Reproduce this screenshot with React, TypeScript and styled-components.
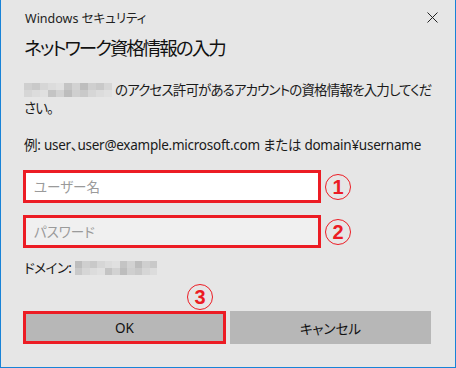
import React from 'react';
import styled, { createGlobalStyle } from 'styled-components';

const GlobalStyle = createGlobalStyle`
  body {
    margin: 0;
    background: #ffffff;
  }
`;

const FONT = `"Noto Sans", "Noto Sans CJK JP", sans-serif`;
const RED = '#ec1c24';

const Dialog = styled.div`
  width: 456px;
  height: 368px;
  box-sizing: border-box;
  background: #e6e6e6;
  border: 1px solid #1883d7;
  border-top: none;
  padding: 0 0 0 22px;
  font-family: ${FONT};
  font-feature-settings: 'palt';
  color: #1a1a1a;
  display: flex;
  flex-direction: column;
`;

const TitleBar = styled.div`
  height: 34px;
  display: flex;
  align-items: center;
  justify-content: space-between;
  padding-left: 2px;
`;

const Caption = styled.span`
  font-size: 12.5px;
  color: #222;
`;

const CloseButton = styled.button`
  width: 44px;
  height: 34px;
  border: none;
  background: transparent;
  display: flex;
  align-items: center;
  justify-content: center;
  padding: 0;
  margin-right: 1px;
`;

const Heading = styled.h1`
  margin: 0;
  padding-left: 1px;
  height: 28px;
  font-size: 18.5px;
  line-height: 28px;
  letter-spacing: -2px;
  font-weight: 400;
  color: #111;
`;

const Paragraph = styled.div<{ $top: number }>`
  margin-top: ${({ $top }) => $top}px;
  display: flex;
  flex-direction: column;
`;

const Line = styled.div<{ $spacing?: number }>`
  height: 18px;
  display: flex;
  align-items: center;
  padding-left: 1px;
  font-size: 13.5px;
  line-height: 18px;
  letter-spacing: ${({ $spacing = -0.85 }) => $spacing}px;
  white-space: nowrap;
  color: #1a1a1a;
`;

const Mosaic = styled.span<{ $cols: number; $cell: number }>`
  display: inline-grid;
  grid-template-columns: repeat(${({ $cols }) => $cols}, ${({ $cell }) => $cell}px);
  grid-auto-rows: 7px;
  margin-right: 3px;
`;

const Cell = styled.span<{ $shade: string }>`
  background: ${({ $shade }) => $shade};
`;

const FieldRow = styled.div<{ $top: number }>`
  margin-top: ${({ $top }) => $top}px;
  height: 33px;
  display: flex;
  align-items: center;
  gap: 4px;
`;

const Field = styled.input<{ $filled?: boolean }>`
  width: 298px;
  height: 33px;
  box-sizing: border-box;
  border: 3px solid ${RED};
  background: ${({ $filled }) => ($filled ? '#ffffff' : '#f0f0f0')};
  padding: 0 8px;
  font-family: ${FONT};
  font-feature-settings: 'palt';
  font-size: 13.5px;
  outline: none;
  &::placeholder {
    color: #9a9a9a;
  }
`;

const Mark = styled.span`
  width: 26px;
  height: 26px;
  box-sizing: border-box;
  border: 1.5px solid ${RED};
  border-radius: 50%;
  display: flex;
  align-items: center;
  justify-content: center;
  font-family: "Liberation Sans", Arial, sans-serif;
  color: ${RED};
  font-size: 20px;
  line-height: 1;
  font-weight: 700;
`;

const Buttons = styled.div`
  position: relative;
  margin-top: 34px;
  display: flex;
  gap: 4px;
`;

const Button = styled.button<{ $marked?: boolean }>`
  height: 33px;
  width: ${({ $marked }) => ($marked ? 203 : 201)}px;
  box-sizing: border-box;
  background: #b7b7b7;
  border: ${({ $marked }) => ($marked ? `3px solid ${RED}` : 'none')};
  font-family: ${FONT};
  font-feature-settings: 'palt';
  font-size: 13.5px;
  font-weight: 400;
  color: #111;
  padding: 0;
`;

const OkMark = styled(Mark)`
  position: absolute;
  left: 164px;
  top: -27px;
`;

const SHADES = ['#dcdcdc', '#cfcfcf', '#c4c4c4', '#d6d6d6', '#bdbdbd', '#e0e0e0', '#c9c9c9', '#d2d2d2'];

const Blur: React.FC<{ cols: number; cell: number; seed: number }> = ({ cols, cell, seed }) => (
  <Mosaic $cols={cols} $cell={cell}>
    {Array.from({ length: cols * 2 }, (_, i) => (
      <Cell key={i} $shade={SHADES[(i * 5 + seed + (i >= cols ? 3 : 0)) % SHADES.length]} />
    ))}
  </Mosaic>
);

const CloseIcon = () => (
  <svg width="11" height="11" viewBox="0 0 11 11">
    <path d="M0.5 0.5 L10.5 10.5 M10.5 0.5 L0.5 10.5" stroke="#222" strokeWidth="1" fill="none" />
  </svg>
);

export default function App() {
  return (
    <>
      <GlobalStyle />
      <Dialog>
        <TitleBar>
          <Caption>Windows セキュリティ</Caption>
          <CloseButton aria-label="閉じる">
            <CloseIcon />
          </CloseButton>
        </TitleBar>
        <Heading>ネットワーク資格情報の入力</Heading>
        <Paragraph $top={19}>
          <Line>
            <Blur cols={11} cell={8} seed={1} />
            のアクセス許可があるアカウントの資格情報を入力してくだ
          </Line>
          <Line>さい。</Line>
        </Paragraph>
        <Paragraph $top={19}>
          <Line $spacing={-0.25}>例: user、user@example.microsoft.com または domain¥username</Line>
        </Paragraph>
        <FieldRow $top={16}>
          <Field $filled placeholder="ユーザー名" />
          <Mark>1</Mark>
        </FieldRow>
        <FieldRow $top={12}>
          <Field type="password" placeholder="パスワード" />
          <Mark>2</Mark>
        </FieldRow>
        <Paragraph $top={11}>
          <Line $spacing={-0.5}>
            ドメイン:&nbsp;
            <Blur cols={11} cell={7.5} seed={4} />
          </Line>
        </Paragraph>
        <Buttons>
          <Button $marked>OK</Button>
          <Button>キャンセル</Button>
          <OkMark>3</OkMark>
        </Buttons>
      </Dialog>
    </>
  );
}
